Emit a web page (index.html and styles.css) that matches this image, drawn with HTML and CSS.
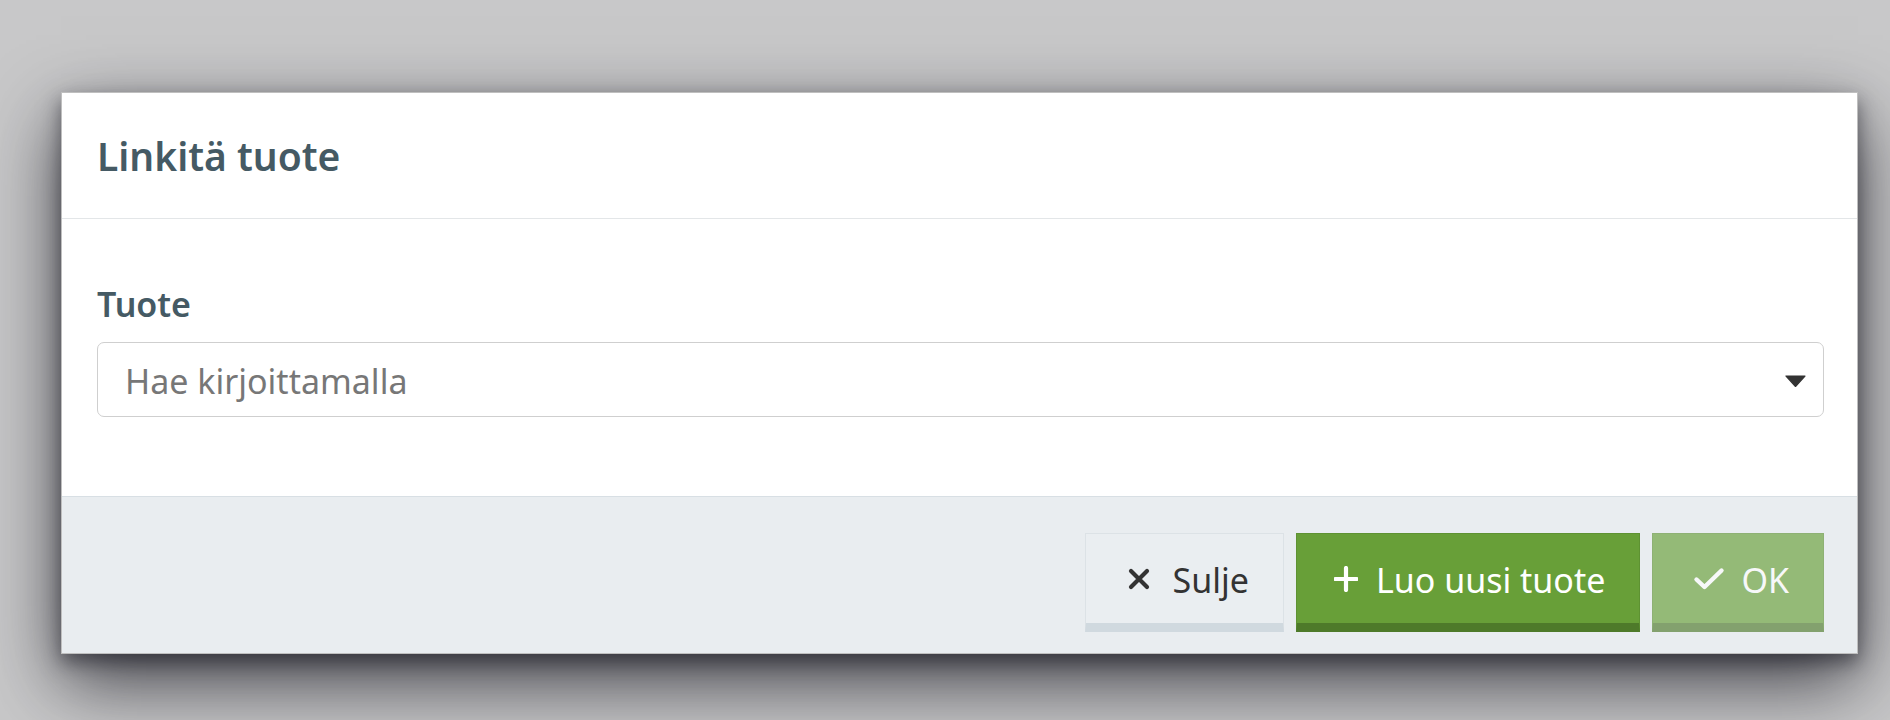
FILE: index.html
```html
<!DOCTYPE html>
<html lang="fi">
<head>
<meta charset="utf-8">
<title>Linkitä tuote</title>
<link rel="stylesheet" href="styles.css">
</head>
<body>
<div class="backdrop">
  <div class="modal">
    <div class="modal-header">
      <h4 class="modal-title">Linkitä tuote</h4>
    </div>
    <div class="modal-body">
      <label class="field-label">Tuote</label>
      <div class="select">
        <span class="placeholder">Hae kirjoittamalla</span>
        <svg class="caret" width="21" height="12" viewBox="0 0 21 12"><path d="M1 1 H20 L10.5 11.5 Z" fill="#333" stroke="#333" stroke-width="1.2" stroke-linejoin="round"/></svg>
      </div>
    </div>
    <div class="modal-footer">
      <button class="btn btn-default btn-close" type="button">
        <svg class="icon icon-x" width="22" height="22" viewBox="0 0 22 22"><path d="M3 3 L19 19 M19 3 L3 19" stroke="#333" stroke-width="4.2" stroke-linecap="round"/></svg>
        <span>Sulje</span>
      </button>
      <button class="btn btn-success btn-new" type="button">
        <svg class="icon icon-plus" width="24" height="26" viewBox="0 0 24 26"><path d="M12 2 V24 M1.5 13 H22.5" stroke="#fff" stroke-width="4.2" stroke-linecap="round"/></svg>
        <span>Luo uusi tuote</span>
      </button>
      <button class="btn btn-success btn-ok" type="button" disabled>
        <svg class="icon icon-check" width="32" height="24" viewBox="0 0 32 24"><path d="M3.5 12.5 L11.5 20 L28.5 3.5" stroke="#fff" stroke-width="4.4" fill="none" stroke-linecap="round" stroke-linejoin="round"/></svg>
        <span>OK</span>
      </button>
    </div>
  </div>
</div>
</body>
</html>
```

FILE: styles.css
```css
html, body {
  margin: 0;
  padding: 0;
}

body {
  background: #c8c8c9;
  font-family: "Noto Sans", "Open Sans", sans-serif;
  width: 1890px;
  height: 720px;
  overflow: hidden;
}

.backdrop {
  padding: 92px 0 0 61px;
}

.modal {
  width: 1795px;
  background: #fff;
  border: 1px solid rgba(0, 0, 0, 0.25);
  box-shadow: 0 28px 70px rgba(20, 20, 30, 0.75), 0 8px 18px rgba(20, 20, 30, 0.5);
}

.modal-header {
  height: 125px;
  display: flex;
  align-items: center;
  padding: 0 35px;
  border-bottom: 1px solid #e3e6e8;
}

.modal-title {
  margin: 0;
  font-size: 39px;
  font-weight: 600;
  color: #455a64;
  line-height: 1;
}

.modal-body {
  padding: 65px 33px 79px 35px;
}

.field-label {
  display: block;
  font-size: 34px;
  font-weight: 600;
  color: #455a64;
  line-height: 40px;
  margin-bottom: 18px;
}

.select {
  height: 73px;
  border: 1px solid #cfcfcf;
  border-radius: 7px;
  display: flex;
  align-items: center;
  justify-content: space-between;
  padding: 0 17px 0 27px;
}

.placeholder {
  font-size: 34px;
  color: #777;
  line-height: 1;
  margin-top: 2px;
}

.caret {
  display: block;
  margin-top: 2px;
}

.modal-footer {
  background: #e9edf0;
  border-top: 1px solid #d8dfe4;
  display: flex;
  justify-content: flex-end;
  gap: 12px;
  padding: 36px 33px 21px;
}

.btn {
  display: flex;
  align-items: center;
  height: 99px;
  box-sizing: border-box;
  border: 1px solid;
  border-bottom-width: 9px;
  border-radius: 0;
  padding: 0 34px 0 40px;
  font-family: "Noto Sans", "Open Sans", sans-serif;
  font-size: 34px;
  line-height: 1;
  cursor: pointer;
}

.btn span {
  display: block;
  margin-top: 3px;
}

.icon {
  display: block;
  flex: none;
}

.btn-default {
  background: #eaeef1;
  color: #333;
  border-color: #dce2e6;
  border-bottom-color: #d0d9df;
}

.btn-success {
  background: #689f38;
  color: #fff;
  border-color: #5e9232;
  border-bottom-color: #4e7a2a;
}

.btn-ok {
  opacity: 0.65;
  cursor: not-allowed;
}

.btn-close {
  padding-left: 42px;
}

.btn-close .icon {
  margin-right: 23px;
}

.btn-new {
  padding-left: 37px;
}

.btn-new .icon {
  margin-right: 18px;
}

.btn-ok {
  padding-left: 40px;
}

.btn-ok .icon {
  margin-right: 16px;
}
```
